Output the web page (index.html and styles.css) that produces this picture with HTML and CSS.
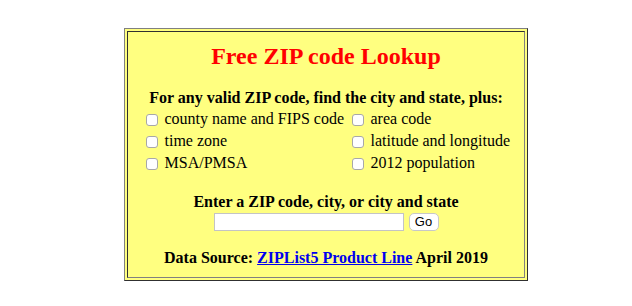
FILE: index.html
```html
<!DOCTYPE html>
<html lang="en">
<head>
<meta charset="utf-8">
<title>Free ZIP code Lookup</title>
<link rel="stylesheet" href="styles.css">
</head>
<body>
<div class="frame">
  <div class="cell">
    <h2 class="title">Free ZIP code Lookup</h2>
    <form class="lookup">
      <p class="lead">For any valid ZIP code, find the city and state, plus:</p>
      <div class="options">
        <label class="opt"><input type="checkbox" class="box"><span>county name and FIPS code</span></label>
        <label class="opt"><input type="checkbox" class="box"><span>area code</span></label>
        <label class="opt"><input type="checkbox" class="box"><span>time zone</span></label>
        <label class="opt"><input type="checkbox" class="box"><span>latitude and longitude</span></label>
        <label class="opt"><input type="checkbox" class="box"><span>MSA/PMSA</span></label>
        <label class="opt"><input type="checkbox" class="box"><span>2012 population</span></label>
      </div>
      <p class="prompt">Enter a ZIP code, city, or city and state</p>
      <div class="entry">
        <input type="text" class="field">
        <button type="button" class="go">Go</button>
      </div>
    </form>
    <p class="source">Data Source: <a href="#" class="link">ZIPList5 Product Line</a> April 2019</p>
  </div>
</div>
</body>
</html>
```

FILE: styles.css
```css
html, body {
  margin: 0;
  padding: 0;
  background: #ffffff;
}

body {
  font-family: "Liberation Serif", "Times New Roman", serif;
  font-size: 16px;
  color: #000000;
}

.frame {
  box-sizing: border-box;
  width: 404px;
  margin: 28px 0 0 124px;
  padding: 2px;
  background: #ffff80;
  border: 1px solid;
  border-color: #808080 #303030 #303030 #808080;
}

.cell {
  border: 1px solid;
  border-color: #303030 #808080 #808080 #303030;
  padding: 10px 0 10px 0;
  text-align: center;
}

.title {
  margin: 0;
  font-size: 24px;
  line-height: 28px;
  font-weight: bold;
  color: #ff0000;
}

.lookup {
  margin: 0;
}

.lead {
  margin: 19px 0 0 0;
  font-weight: bold;
  line-height: 18px;
}

.options {
  display: grid;
  grid-template-columns: 206px 163px;
  grid-auto-rows: 22px;
  justify-content: center;
  margin-top: 1px;
  text-align: left;
}

.opt {
  display: flex;
  align-items: center;
  padding-left: 4px;
  line-height: 22px;
  white-space: nowrap;
}

.box {
  appearance: none;
  -webkit-appearance: none;
  box-sizing: border-box;
  width: 12px;
  height: 12px;
  margin: 0 7px 0 0;
  border: 1px solid #a8a8a8;
  border-radius: 3px;
  background: #ffffff;
  flex: none;
  position: relative;
  top: 1px;
}

.prompt {
  margin: 19px 0 0 0;
  font-weight: bold;
  line-height: 18px;
}

.entry {
  display: flex;
  justify-content: center;
  align-items: center;
  gap: 5px;
  margin-top: 1px;
  height: 19px;
}

.field {
  box-sizing: border-box;
  width: 190px;
  height: 18px;
  margin: 0;
  padding: 0 3px;
  border: 1px solid #c4c4c4;
  background: #ffffff;
  font-size: 13px;
}

.go {
  box-sizing: border-box;
  width: 30px;
  height: 18px;
  margin: 0;
  padding: 0;
  border: 1px solid #c8c8c8;
  border-radius: 5px;
  background: #ffffff;
  font-family: "Liberation Sans", Arial, sans-serif;
  font-size: 13px;
  line-height: 16px;
  color: #000000;
}

.source {
  margin: 18px 0 0 0;
  font-weight: bold;
  line-height: 18px;
}

.link {
  color: #0000ee;
  text-decoration: underline;
}
```
